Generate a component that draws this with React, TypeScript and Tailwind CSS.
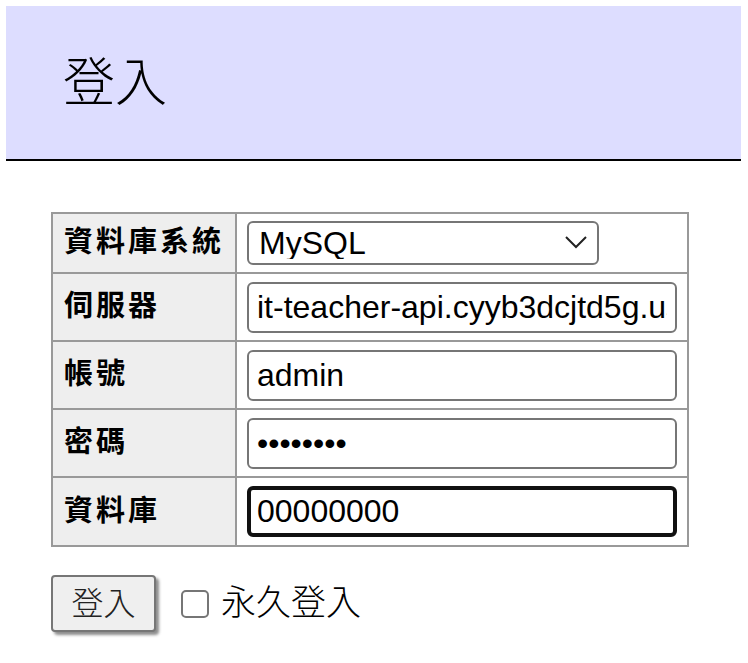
import { useState } from "react";

const cjk = "font-['Liberation_Sans','Noto_Sans_CJK_TC',sans-serif]";

function Label({ children }: { children: React.ReactNode }) {
  return (
    <th className="w-[184px] border-2 border-[#999] bg-[#eee] pl-[11px] pr-0 text-left align-middle text-[29px] font-bold tracking-[3px] text-black">
      {children}
    </th>
  );
}

function Field({ children }: { children: React.ReactNode }) {
  return <td className="border-2 border-[#999] pl-[10px] pr-[10px] align-middle">{children}</td>;
}

export default function App() {
  const [server, setServer] = useState("it-teacher-api.cyyb3dcjtd5g.us-east-1.rds.amazonaws.com");
  const [user, setUser] = useState("admin");
  const [pass, setPass] = useState("12345678");
  const [db, setDb] = useState("00000000");
  const [permanent, setPermanent] = useState(false);

  const inputCls =
    "block h-[51px] w-[430px] rounded-[6px] border-2 border-[#767676] bg-white px-[8px] text-[32px] text-black outline-none font-['Liberation_Sans',Arial,sans-serif]";

  return (
    <div className={`min-h-screen bg-white ${cjk}`}>
      {/* Header */}
      <div className="ml-[6px] mt-[6px] flex h-[155px] w-[735px] items-center border-b-2 border-black bg-[#ddf] pl-[57px]">
        <h1 className="text-[52px] font-light leading-none text-black">登入</h1>
      </div>

      <form className="ml-[51px] mt-[51px]" onSubmit={(e) => e.preventDefault()}>
        <table className="w-[638px] border-collapse">
          <tbody>
            <tr className="h-[60px]">
              <Label>資料庫系統</Label>
              <Field>
                <div className="relative w-[352px]">
                  <select className="block h-[44px] w-[352px] appearance-none rounded-[6px] border-2 border-[#767676] bg-white pl-[10px] text-[32px] leading-none text-black outline-none font-['Liberation_Sans',Arial,sans-serif]">
                    <option>MySQL</option>
                    <option>SQLite</option>
                    <option>PostgreSQL</option>
                    <option>Oracle (beta)</option>
                    <option>MS SQL</option>
                  </select>
                  <svg
                    className="pointer-events-none absolute right-[12px] top-[15px]"
                    width="22"
                    height="13"
                    viewBox="0 0 22 13"
                    fill="none"
                    stroke="#222"
                    strokeWidth="2"
                  >
                    <path d="M1 1l10 10L21 1" />
                  </svg>
                </div>
              </Field>
            </tr>
            <tr className="h-[68px]">
              <Label>伺服器</Label>
              <Field>
                <input className={inputCls} value={server} onChange={(e) => setServer(e.target.value)} />
              </Field>
            </tr>
            <tr className="h-[68px]">
              <Label>帳號</Label>
              <Field>
                <input className={inputCls} value={user} onChange={(e) => setUser(e.target.value)} />
              </Field>
            </tr>
            <tr className="h-[68px]">
              <Label>密碼</Label>
              <Field>
                <input type="password" className={inputCls} value={pass} onChange={(e) => setPass(e.target.value)} />
              </Field>
            </tr>
            <tr className="h-[69px]">
              <Label>資料庫</Label>
              <Field>
                <input
                  autoFocus
                  className="block h-[51px] w-[430px] rounded-[6px] border-4 border-[#111] bg-white px-[6px] text-[32px] text-black outline-none font-['Liberation_Sans',Arial,sans-serif]"
                  value={db}
                  onChange={(e) => setDb(e.target.value)}
                />
              </Field>
            </tr>
          </tbody>
        </table>

        <div className="mt-[28px] flex items-center">
          <button
            type="submit"
            className="h-[57px] w-[105px] rounded-[4px] border-2 border-[#767676] bg-[#efefef] text-[32px] font-light text-[#222] shadow-[3px_3px_3px_rgba(0,0,0,0.45)]"
          >
            登入
          </button>
          <label className="ml-[25px] flex items-center gap-[12px] text-[35px] font-light text-black">
            <input
              type="checkbox"
              checked={permanent}
              onChange={(e) => setPermanent(e.target.checked)}
              className="h-[28px] w-[28px] appearance-none rounded-[5px] border-2 border-[#767676] bg-white"
            />
            永久登入
          </label>
        </div>
      </form>
    </div>
  );
}
